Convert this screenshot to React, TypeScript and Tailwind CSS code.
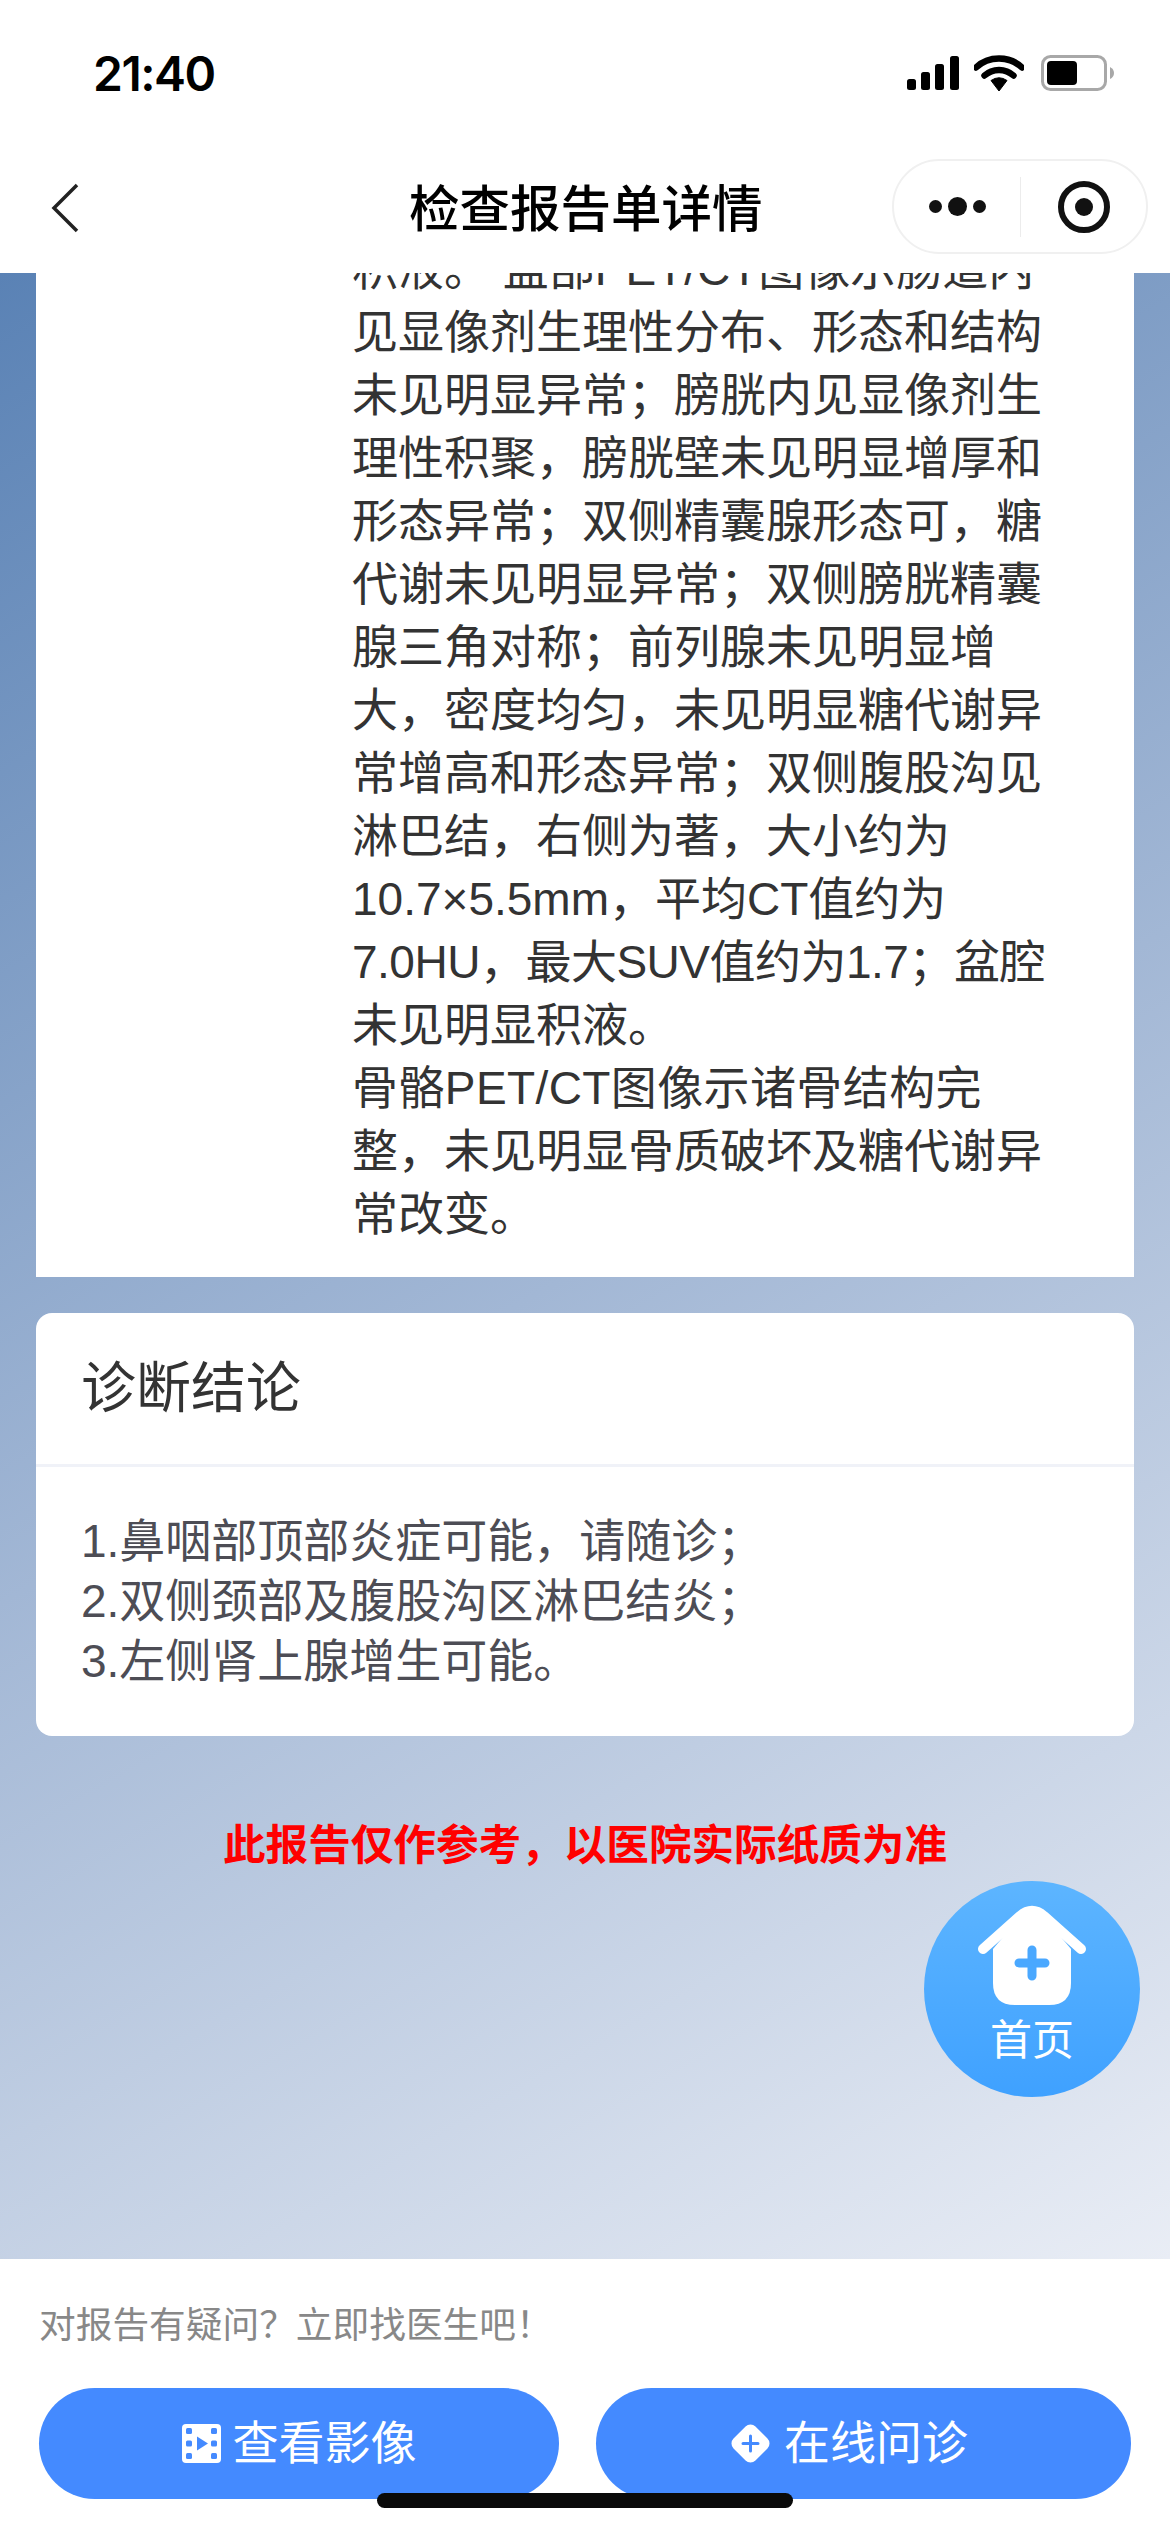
import React from "react";

const cjk = "font-['Liberation_Sans','Noto_Sans_CJK_SC','Noto_Sans',sans-serif]";

const reportLines = [
  { text: "积液。 盆部PET/CT图像示肠道内", cls: "" },
  { text: "见显像剂生理性分布、形态和结构", cls: "" },
  { text: "未见明显异常；膀胱内见显像剂生", cls: "" },
  { text: "理性积聚，膀胱壁未见明显增厚和", cls: "" },
  { text: "形态异常；双侧精囊腺形态可，糖", cls: "" },
  { text: "代谢未见明显异常；双侧膀胱精囊", cls: "" },
  { text: "腺三角对称；前列腺未见明显增", cls: "" },
  { text: "大，密度均匀，未见明显糖代谢异", cls: "" },
  { text: "常增高和形态异常；双侧腹股沟见", cls: "" },
  { text: "淋巴结，右侧为著，大小约为", cls: "" },
  { text: "10.7×5.5mm，平均CT值约为", cls: "" },
  { text: "7.0HU，最大SUV值约为1.7；盆腔", cls: "tracking-[-0.5px]" },
  { text: "未见明显积液。", cls: "" },
  { text: "骨骼PET/CT图像示诸骨结构完", cls: "tracking-[0.4px]" },
  { text: "整，未见明显骨质破坏及糖代谢异", cls: "" },
  { text: "常改变。", cls: "" },
];

function StatusIcons() {
  return (
    <div className="flex items-center">
      <svg width="52" height="34" viewBox="0 0 52 34" className="mr-[15px]">
        <rect x="0" y="23" width="9" height="11" rx="2.5" fill="#000" />
        <rect x="14" y="16" width="9" height="18" rx="2.5" fill="#000" />
        <rect x="28" y="8" width="9" height="26" rx="2.5" fill="#000" />
        <rect x="43" y="0" width="9" height="34" rx="2.5" fill="#000" />
      </svg>
      <svg width="50" height="36" viewBox="0 0 50 36" className="mr-[17px]">
        <path d="M2 12.5C14.5 0.5 35.5 0.5 48 12.5" fill="none" stroke="#000" strokeWidth="6.5" strokeLinecap="round" />
        <path d="M10.5 20.5C18.5 13 31.5 13 39.5 20.5" fill="none" stroke="#000" strokeWidth="6.5" strokeLinecap="round" />
        <path d="M17 25.5Q25 20 33 25.5L25 36Z" fill="#000" stroke="#000" strokeWidth="1" strokeLinejoin="round" />
      </svg>
      <svg width="73" height="36" viewBox="0 0 73 36">
        <rect x="1.5" y="1.5" width="63" height="33" rx="8" fill="none" stroke="#a8a8a8" strokeWidth="3" />
        <rect x="6" y="6" width="30" height="24" rx="4" fill="#000" />
        <path d="M69 12Q73 14 73 18Q73 22 69 24Z" fill="#a8a8a8" />
      </svg>
    </div>
  );
}

function Capsule() {
  return (
    <div className="flex h-[95px] w-[256px] items-center rounded-full border-2 border-[#f0f0f0] bg-white">
      <div className="flex w-[126px] items-center justify-center gap-[6px]">
        <span className="h-[13px] w-[13px] rounded-full bg-[#111]" />
        <span className="h-[19px] w-[19px] rounded-full bg-[#111]" />
        <span className="h-[13px] w-[13px] rounded-full bg-[#111]" />
      </div>
      <div className="h-[60px] w-[1px] bg-[#ececec]" />
      <div className="flex flex-1 items-center justify-center">
        <div className="flex h-[52px] w-[52px] items-center justify-center rounded-full border-[6px] border-[#111]">
          <span className="h-[18px] w-[18px] rounded-full bg-[#111]" />
        </div>
      </div>
    </div>
  );
}

function FilmIcon() {
  const holes = [4, 16.5, 29];
  return (
    <svg width="39" height="39" viewBox="0 0 39 39">
      <rect width="39" height="39" rx="4" fill="#fff" />
      {holes.map((y) => (
        <React.Fragment key={y}>
          <rect x="4" y={y} width="6" height="6" rx="1.5" fill="#448aff" />
          <rect x="29" y={y} width="6" height="6" rx="1.5" fill="#448aff" />
        </React.Fragment>
      ))}
      <path d="M15 12.5L26 19.5L15 26.5Z" fill="#448aff" />
    </svg>
  );
}

function DiamondIcon() {
  return (
    <svg width="39" height="39" viewBox="0 0 39 39">
      <rect x="4" y="4" width="31" height="31" rx="7" fill="#fff" transform="rotate(45 19.5 19.5)" />
      <path d="M12 19.5H27M19.5 12V27" stroke="#448aff" strokeWidth="3" strokeLinecap="round" />
    </svg>
  );
}

function HomeIcon() {
  return (
    <svg width="216" height="130" viewBox="0 0 216 130" className="absolute left-0 top-0">
      <path d="M69 68L96 36Q108 26 120 36L147 68V102Q147 124 125 124H91Q69 124 69 102Z" fill="#fff" />
      <path d="M59 68L96 35Q108 25 120 35L157 68" fill="none" stroke="#fff" strokeWidth="10" strokeLinecap="round" strokeLinejoin="round" />
      <path d="M95 82H121M108 69V95" stroke="#4aa8ff" strokeWidth="9" strokeLinecap="round" />
    </svg>
  );
}

export default function App() {
  return (
    <div className={`relative flex h-[2532px] w-[1170px] flex-col overflow-hidden bg-white ${cjk}`}>
      <header className="z-10 h-[273px] shrink-0 bg-white">
        <div className="flex h-[149px] items-start justify-between pl-[93px] pr-[56px] pt-[55px]">
          <span className="font-['Inter',sans-serif] text-[48px] font-semibold leading-[38px] tracking-[-1.5px] text-black">21:40</span>
          <StatusIcons />
        </div>
        <div className="flex h-[124px] items-start pr-[22px] pt-[10px]">
          <div className="flex w-[892px] items-center pl-[50px]">
            <svg width="30" height="50" viewBox="0 0 30 50" className="shrink-0">
              <path d="M27 2L4 25L27 48" fill="none" stroke="#222" strokeWidth="3.5" />
            </svg>
            <h1 className="ml-[329px] whitespace-nowrap pt-[3px] text-[50.5px] font-medium leading-[95px] text-black">检查报告单详情</h1>
          </div>
          <Capsule />
        </div>
      </header>

      <main className="relative flex min-h-0 flex-1 flex-col overflow-hidden bg-[linear-gradient(150deg,#5a82b5_0%,#a2b7d5_50%,#e9edf5_100%)] px-[36px]">
        <section className="-mt-[35px] shrink-0 bg-white pb-[31px] pl-[316px] text-[46px] leading-[63px] text-[#333]">
          {reportLines.map((line) => (
            <div key={line.text} className={`whitespace-nowrap ${line.cls}`}>{line.text}</div>
          ))}
        </section>

        <section className="mt-[36px] shrink-0 overflow-hidden rounded-[16px] bg-white">
          <h2 className="flex h-[154px] items-center border-b-[3px] border-[#f0f2f8] pl-[45px] text-[55px] font-normal text-[#333]">诊断结论</h2>
          <div className="pb-[45px] pl-[45px] pt-[44px] text-[46px] leading-[60px] text-[#4d4d55]">
            <div>1.鼻咽部顶部炎症可能，请随诊；</div>
            <div>2.双侧颈部及腹股沟区淋巴结炎；</div>
            <div>3.左侧肾上腺增生可能。</div>
          </div>
        </section>

        <p className="mt-[78px] text-center text-[42.6px] font-bold leading-[63px] text-[#ff0000]">此报告仅作参考，以医院实际纸质为准</p>

        <a className="absolute right-[30px] top-[1608px] block h-[216px] w-[216px] rounded-full bg-[linear-gradient(180deg,#5db5ff,#3fa1ff)]">
          <HomeIcon />
          <span className="absolute inset-x-0 top-[129px] text-center text-[42px] leading-[62px] text-white">首页</span>
        </a>
      </main>

      <footer className="h-[273px] shrink-0 bg-white pl-[39px] pr-[39px] pt-[42px]">
        <p className="text-[36.7px] leading-[50px] text-[#888]">对报告有疑问？立即找医生吧！</p>
        <div className="mt-[37px] flex gap-[37px]">
          <button className="flex h-[111px] w-[520px] items-center justify-center gap-[12px] rounded-full bg-[#448aff] text-[46px] text-white">
            <FilmIcon />
            查看影像
          </button>
          <button className="flex h-[111px] flex-1 items-center justify-center gap-[14px] rounded-full bg-[#448aff] pr-[28px] text-[46px] text-white">
            <DiamondIcon />
            在线问诊
          </button>
        </div>
      </footer>

      <div className="absolute bottom-[24px] left-[377px] h-[15px] w-[416px] rounded-full bg-[#0a0a0a]" />
    </div>
  );
}
